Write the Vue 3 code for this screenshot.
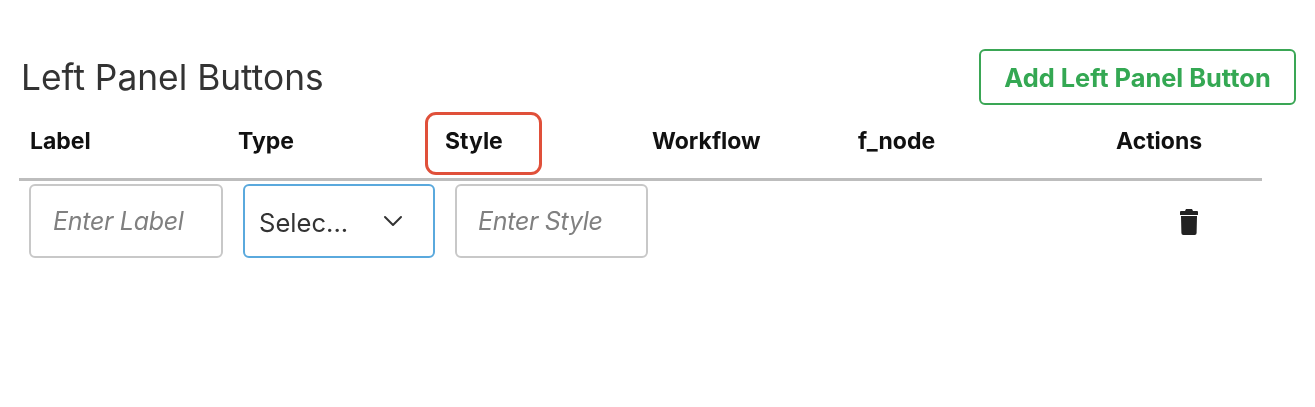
<script setup>
const columns = ['Label', 'Type', 'Style', 'Workflow', 'f_node', 'Actions']
</script>

<template>
  <div class="page">
    <div class="head">
      <h2 class="title">Left Panel Buttons</h2>
      <button class="add" type="button"><span class="add-text">Add Left Panel Button</span></button>
    </div>
    <div class="table">
      <div class="row header">
        <div v-for="c in columns" :key="c" class="th">
          <span class="th-text">{{ c }}</span>
          <span v-if="c === 'Style'" class="callout"></span>
        </div>
      </div>
      <div class="row body">
        <div class="td"><input class="field" placeholder="Enter Label" /></div>
        <div class="td sel">
          <div class="select">
            <span>Selec...</span>
            <svg width="20" height="12" viewBox="0 0 20 12" fill="none"><path d="M2 2l8 8 8-8" stroke="#333" stroke-width="2" stroke-linecap="round" stroke-linejoin="round" /></svg>
          </div>
        </div>
        <div class="td third"><input class="field" placeholder="Enter Style" /></div>
        <div class="td"></div>
        <div class="td"></div>
        <div class="td icon">
          <svg width="20" height="26" viewBox="0 0 20 26"><path fill="#222" d="M7 0h6l1 2h4a1 1 0 0 1 1 1v3H1V3a1 1 0 0 1 1-1h4zM2 7h16l-.4 17a2 2 0 0 1-2 2H4.400a2 2 0 0 1-2-2z" /></svg>
        </div>
      </div>
    </div>
  </div>
</template>

<style>
html, body { background: #fff; }
</style>

<style scoped>
.page {
  box-sizing: border-box;
  width: 1315px;
  height: 407px;
  padding: 49px 19px 0 19px;
  font-family: Inter, "Noto Sans", sans-serif;
  overflow: hidden;
}
.head {
  display: flex;
  justify-content: space-between;
  align-items: center;
  height: 56px;
}
.title {
  margin: 0 0 0 2px;
  font-size: 35.3px;
  font-weight: 400;
  color: #333;
  filter: blur(0.5px);
}
.add {
  box-sizing: border-box;
  width: 317px;
  height: 56px;
  border: 2px solid #3aa655;
  border-radius: 6px;
  background: #fff;
  color: #34a853;
  font: 700 25.4px Inter, sans-serif;
}
.add-text { display: inline-block; filter: blur(0.4px); }
.table { width: 1243px; }
.row {
  display: grid;
  grid-template-columns: 208px 207px 207px 206px 258px 157px;
}
.header {
  border-bottom: 3px solid #bdbdbd;
  height: 73px;
}
.th {
  position: relative;
  padding: 23px 0 0 11px;
  font-size: 23px;
  font-weight: 700;
  line-height: 27px;
  color: #111;
}
.th-text { display: inline-block; filter: blur(0.4px); }
.callout {
  position: absolute;
  left: -9px;
  top: 7px;
  width: 117px;
  height: 63px;
  box-sizing: border-box;
  border: 3px solid #e0503a;
  border-radius: 11px;
}
.body { padding-top: 3px; }
.td { padding-left: 10px; }
.td.sel { padding-left: 16px; }
.td.third { padding-left: 21px; }
.field {
  box-sizing: border-box;
  width: 194px;
  height: 74px;
  padding: 0 22px;
  border: 2px solid #c8c8c8;
  border-radius: 6px;
  font: italic 400 25px Inter, sans-serif;
  letter-spacing: -0.3px;
  outline: none;
  background: #fff;
  filter: blur(0.5px);
}
.third .field { width: 193px; padding: 0 21px; }
.field::placeholder { color: #808080; opacity: 1; }
.select {
  box-sizing: border-box;
  width: 192px;
  height: 74px;
  padding: 3px 30px 0 14px;
  border: 2px solid #5aa9dd;
  border-radius: 6px;
  display: flex;
  align-items: center;
  justify-content: space-between;
  font-size: 25.6px;
  color: #333;
  filter: blur(0.4px);
}
.select svg { margin-top: -3px; }
.icon { padding: 25px 0 0 74px; filter: blur(0.4px); }
</style>
